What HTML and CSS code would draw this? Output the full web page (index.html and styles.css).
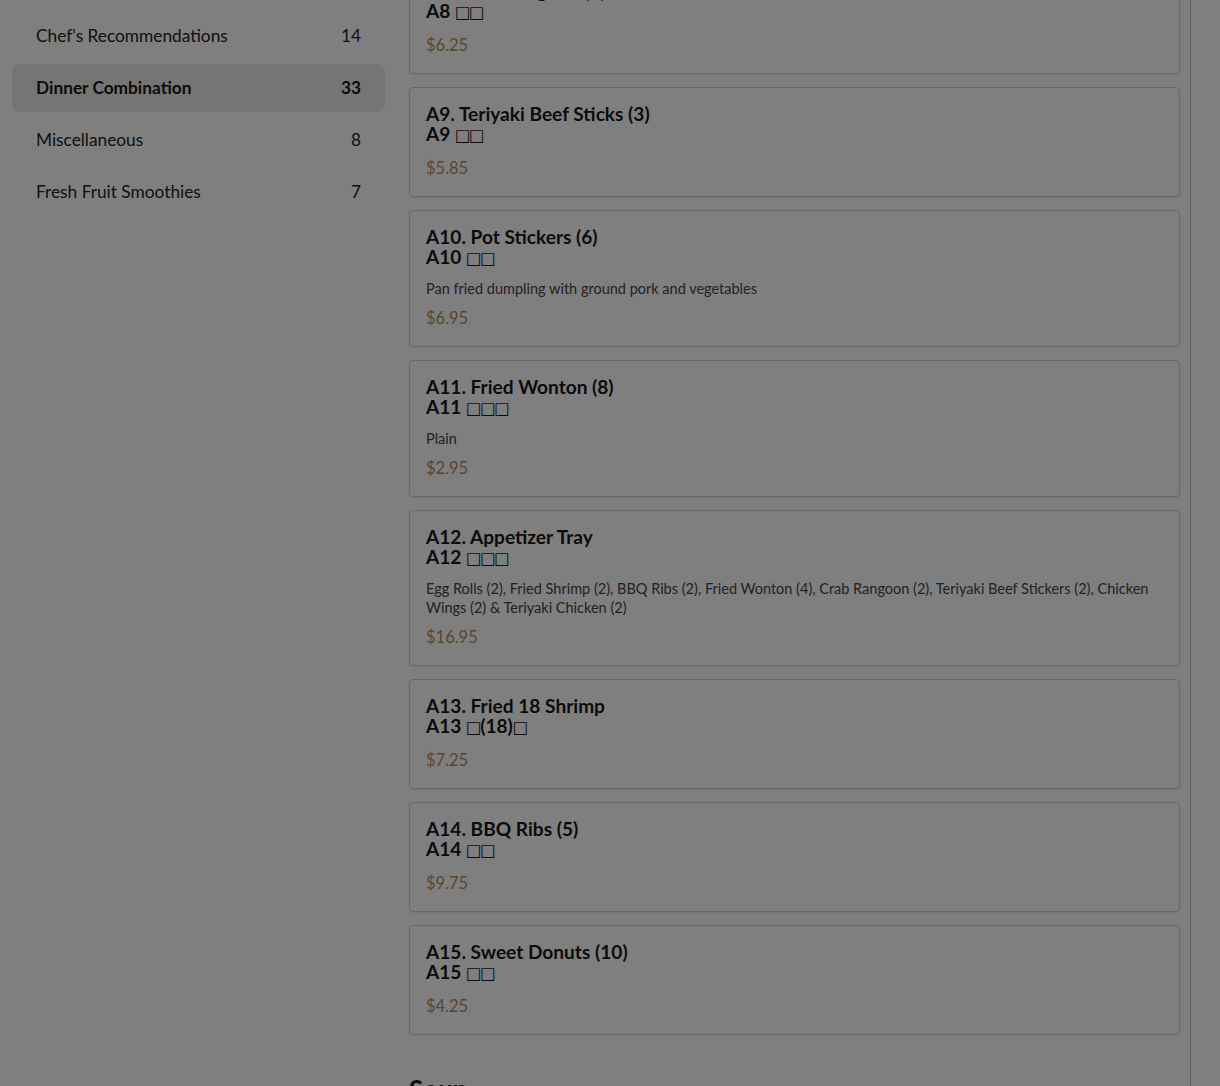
FILE: index.html
```html
<!DOCTYPE html>
<html lang="en">
<head>
<meta charset="utf-8">
<title>Menu</title>
<link rel="stylesheet" href="styles.css">
</head>
<body>
<div class="layout">
  <aside class="sidebar">
    <nav class="cat-list">
      <a class="cat"><span>Chef's Recommendations</span><span>14</span></a>
      <a class="cat active"><span>Dinner Combination</span><span>33</span></a>
      <a class="cat"><span>Miscellaneous</span><span>8</span></a>
      <a class="cat"><span>Fresh Fruit Smoothies</span><span>7</span></a>
    </nav>
  </aside>
  <main class="menu">
    <div class="items">
      <div class="card">
        <h3 class="title">A8. Crab Rangoon (6)<br>A8 <span class="cjk">□□</span></h3>
        <div class="price">$6.25</div>
      </div>
      <div class="card">
        <h3 class="title">A9. Teriyaki Beef Sticks (3)<br>A9 <span class="cjk">□□</span></h3>
        <div class="price">$5.85</div>
      </div>
      <div class="card">
        <h3 class="title">A10. Pot Stickers (6)<br>A10 <span class="cjk">□□</span></h3>
        <p class="desc">Pan fried dumpling with ground pork and vegetables</p>
        <div class="price">$6.95</div>
      </div>
      <div class="card">
        <h3 class="title">A11. Fried Wonton (8)<br>A11 <span class="cjk">□□□</span></h3>
        <p class="desc">Plain</p>
        <div class="price">$2.95</div>
      </div>
      <div class="card">
        <h3 class="title">A12. Appetizer Tray<br>A12 <span class="cjk">□□□</span></h3>
        <p class="desc">Egg Rolls (2), Fried Shrimp (2), BBQ Ribs (2), Fried Wonton (4), Crab Rangoon (2), Teriyaki Beef Stickers (2), Chicken Wings (2) &amp; Teriyaki Chicken (2)</p>
        <div class="price">$16.95</div>
      </div>
      <div class="card">
        <h3 class="title">A13. Fried 18 Shrimp<br>A13 <span class="cjk">□</span>(18)<span class="cjk">□</span></h3>
        <div class="price">$7.25</div>
      </div>
      <div class="card">
        <h3 class="title">A14. BBQ Ribs (5)<br>A14 <span class="cjk">□□</span></h3>
        <div class="price">$9.75</div>
      </div>
      <div class="card">
        <h3 class="title">A15. Sweet Donuts (10)<br>A15 <span class="cjk">□□</span></h3>
        <div class="price">$4.25</div>
      </div>
    </div>
    <h2 class="section">Soup</h2>
  </main>
  <aside class="cart"></aside>
</div>
<div class="backdrop"></div>
</body>
</html>
```
FILE: styles.css
```css
* { box-sizing: border-box; }
html, body { margin: 0; padding: 0; }
body {
  font-family: "Lato", "Noto Sans", sans-serif;
  color: #1c1c1c;
  background: #ffffff;
  overflow: hidden;
  height: 1086px;
}
.layout {
  display: flex;
  align-items: flex-start;
  width: 1220px;
  height: 1086px;
  overflow: hidden;
}
.sidebar {
  width: 397px;
  flex: 0 0 397px;
  padding: 12px 12px 0 12px;
}
.cat-list {
  display: flex;
  flex-direction: column;
  gap: 4px;
}
.cat {
  display: flex;
  justify-content: space-between;
  align-items: center;
  height: 48px;
  padding: 0 24px 2px;
  border-radius: 8px;
  font-size: 17.3px;
  color: #222;
}
.cat.active {
  background: #eeeae6;
  font-weight: 700;
  color: #161616;
}
.menu {
  width: 771px;
  flex: 0 0 771px;
  margin-left: 12px;
}
.items {
  display: flex;
  flex-direction: column;
  gap: 13px;
  margin-top: -36px;
}
.card {
  border: 1px solid #d2d2d2;
  border-radius: 4px;
  padding: 16px;
  box-shadow: 0 1px 2px rgba(0,0,0,0.08);
  background: #fff;
}
.title {
  margin: 0 0 12px;
  font-size: 19.1px;
  line-height: 20px;
  font-weight: 700;
  color: #161616;
}
.cjk {
  font-family: "DejaVu Sans", sans-serif;
  font-weight: 400;
  font-size: 16.5px;
  line-height: 0;
  letter-spacing: -1.5px;
}
.desc {
  margin: 0 0 8px;
  font-size: 14.5px;
  line-height: 19px;
  color: #444;
}
.price {
  font-size: 16.5px;
  line-height: 24px;
  color: #b38d5c;
}
.section {
  margin: 38px 0 0;
  font-size: 26px;
  font-weight: 700;
}
.cart {
  flex: 1 0 auto;
  margin-left: 10px;
  height: 1086px;
  border-left: 1px solid #bcbcbc;
}
.backdrop {
  position: fixed;
  inset: 0;
  background: rgba(0,0,0,0.5);
}
```
